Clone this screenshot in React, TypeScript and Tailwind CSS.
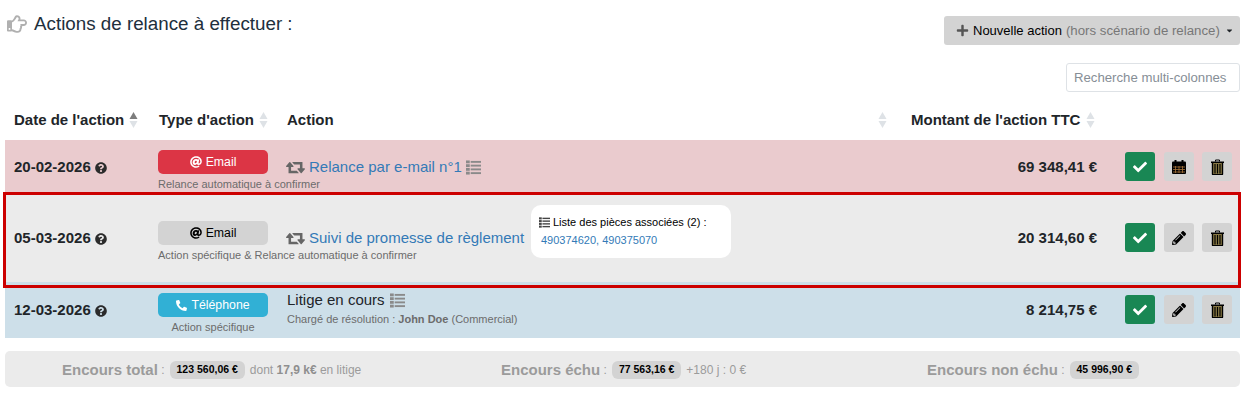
import React from "react";
import { FaRegHandPointRight, FaCheck, FaPencilAlt, FaPhone, FaAt, FaQuestionCircle, FaPlus, FaCaretDown } from "react-icons/fa";

function Sort({ active = false }: { active?: boolean }) {
  return (
    <svg width="9" height="18" viewBox="0 0 9 18" className="shrink-0">
      <path d="M4.5 1 L8.5 8 H0.5 Z" fill={active ? "#7d7d7d" : "#dee2e6"} />
      <path d="M4.5 17 L8.5 10 H0.5 Z" fill="#dee2e6" />
    </svg>
  );
}

function Retweet() {
  return (
    <svg width="19" height="18" viewBox="0 0 1920 1792" fill="#666" className="shrink-0 ml-[-1px]">
      <path d="M1280 1504q0 13-9.5 22.5t-22.5 9.5h-960q-8 0-13.5-2t-9-7-5.5-8-3-11.5-1-11.5v-600h-192q-26 0-45-19t-19-45q0-24 15-41l320-384q19-22 49-22t49 22l320 384q15 17 15 41 0 26-19 45t-45 19h-192v384h576q16 0 25 11l160 192q7 10 7 21zm640-416q0 24-15 41l-320 384q-20 23-49 23t-49-23l-320-384q-15-17-15-41 0-26 19-45t45-19h192v-384h-576q-16 0-25-12l-160-192q-7-9-7-20 0-13 9.5-22.5t22.5-9.5h960q8 0 13.5 2t9 7 5.5 8.5 3 11.5 1 11v600h192q26 0 45 19t19 45z" />
    </svg>
  );
}

function ListIcon({ size = 15, color = "#8a8a8a" }: { size?: number; color?: string }) {
  return (
    <svg width={size} height={size} viewBox="0 0 16 15" fill={color} className="shrink-0">
      <rect x="0" y="0" width="4" height="3" />
      <rect x="0" y="4" width="4" height="3" />
      <rect x="0" y="8" width="4" height="3" />
      <rect x="0" y="12" width="4" height="3" />
      <rect x="5" y="0.5" width="11" height="2" />
      <rect x="5" y="4.5" width="11" height="2" />
      <rect x="5" y="8.5" width="11" height="2" />
      <rect x="5" y="12.5" width="11" height="2" />
    </svg>
  );
}

function Trash() {
  return (
    <svg width="13" height="16" viewBox="0 0 13 16" className="shrink-0">
      <path d="M4.5 2.5 V1 H8.5 V2.5" fill="none" stroke="#000" strokeWidth="1" />
      <rect x="0" y="2.5" width="13" height="1.5" fill="#000" />
      <rect x="1.5" y="4" width="10" height="11.5" fill="#8a7a45" />
      <path d="M1.5 4 V15 a0.8 0.8 0 0 0 0.8 0.8 H10.7 a0.8 0.8 0 0 0 0.8 -0.8 V4" fill="none" stroke="#000" strokeWidth="1.4" />
      <path d="M4 5 V14.5 M6.5 5 V14.5 M9 5 V14.5" stroke="#000" strokeWidth="1.2" />
    </svg>
  );
}

function Calendar() {
  return (
    <svg width="14" height="14" viewBox="0 0 14 14" className="shrink-0">
      <rect x="0" y="1.5" width="14" height="12.5" rx="1" fill="#000" />
      <rect x="2.5" y="0" width="2" height="3" fill="#000" />
      <rect x="9.5" y="0" width="2" height="3" fill="#000" />
      <path d="M1 7 H13 M1 9.5 H13 M1 12 H13" stroke="#a8743a" strokeWidth="0.8" />
      <path d="M3.5 6 V13 M7 6 V13 M10.5 6 V13" stroke="#a8743a" strokeWidth="0.8" />
    </svg>
  );
}

function ActionButton({ kind }: { kind: "check" | "cal" | "pen" | "trash" }) {
  if (kind === "check")
    return (
      <div className="w-[30px] h-[29px] rounded-[3px] bg-[#198754] text-white flex items-center justify-center">
        <FaCheck size={14} />
      </div>
    );
  return (
    <div className="w-[30px] h-[29px] rounded-[3px] bg-[#d3d3d3] text-black flex items-center justify-center">
      {kind === "cal" && <Calendar />}
      {kind === "pen" && <FaPencilAlt size={14} />}
      {kind === "trash" && <Trash />}
    </div>
  );
}

function Row({ bg, h, date, badge, action, amount, second, extra, btnCls = "mt-[1px]", textCls = "mt-[2px]" }: { bg: string; h: string; date: string; badge: React.ReactNode; action: React.ReactNode; amount: string; second: "cal" | "pen"; extra?: React.ReactNode; btnCls?: string; textCls?: string }) {
  return (
    <div className={`relative flex items-center ${bg} ${h}`}>
      <div className={`w-[144px] pl-[9px] flex items-center gap-[4px] text-[15px] font-bold text-[#212529] ${textCls}`}>
        {date}
        <FaQuestionCircle size={12} className="mt-[2px] text-[#2b2b2b]" />
      </div>
      <div className="w-[138px] pl-[9px] shrink-0">{badge}</div>
      <div className="flex-1 min-w-0">{action}</div>
      <div className={`text-[15px] font-bold text-[#212529] mr-[28px] ${textCls}`}>{amount}</div>
      <div className={`flex items-center w-[115px] shrink-0 gap-[8px] ${btnCls}`}>
        <div className="mr-[1px]"><ActionButton kind="check" /></div>
        <ActionButton kind={second} />
        <ActionButton kind="trash" />
      </div>
      {extra}
    </div>
  );
}

function Badge({ cls, icon, label }: { cls: string; icon: React.ReactNode; label: string }) {
  return (
    <div className={`w-[110px] h-[24px] rounded-[5px] flex items-center justify-center gap-[4px] text-[12.3px] ${cls}`}>
      {icon}
      {label}
    </div>
  );
}

function Small({ children, className = "" }: { children: React.ReactNode; className?: string }) {
  return <div className={`text-[11px] leading-[12px] text-[#6c6c6c] whitespace-nowrap ${className}`}>{children}</div>;
}

function Pill({ children }: { children: React.ReactNode }) {
  return <span className="inline-flex items-center h-[18px] px-[7px] rounded-[6px] bg-[#d3d3d3] text-[10.5px] font-bold text-black ml-[5px] mr-[5px]">{children}</span>;
}

export default function App() {
  return (
    <div className="w-[1249px] h-[400px] bg-white overflow-hidden font-['Liberation_Sans',Arial,sans-serif] text-[#212529]">
      <div className="pl-[7px] pr-[9px] flex justify-between items-start h-[63px]">
        <div className="flex items-center gap-[7px] pt-[12px]">
          <FaRegHandPointRight size={20} className="text-[#b0b0b0]" />
          <span className="text-[18.8px] leading-[24px] text-[#212f3c]">Actions de relance à effectuer :</span>
        </div>
        <div className="mt-[16px] w-[296px] h-[29px] rounded-[3px] bg-[#d3d3d3] flex items-center pl-[12px] text-[13px]">
          <FaPlus size={13} className="text-[#555] shrink-0" />
          <span className="text-black ml-[4px]">Nouvelle action</span>
          <span className="text-[#777] ml-[4px] text-[13.25px]">(hors scénario de relance)</span>
          <FaCaretDown size={9} className="ml-[5px] text-[#212529]" />
        </div>
      </div>
      <div className="flex justify-end pr-[9px] h-[37px]">
        <div className="w-[174px] h-[29px] rounded-[3px] border border-[#dee2e6] flex items-center pl-[7px] text-[13.2px] text-[#868e96]">Recherche multi-colonnes</div>
      </div>
      <div className="ml-[5px] mr-[9px]">
        <div className="flex items-center h-[40px] text-[15px] font-bold text-[#212529]">
          <div className="w-[144px] pl-[9px] flex items-center gap-[5px]">Date de l'action <Sort active /></div>
          <div className="w-[138px] pl-[10px] flex items-center gap-[5px]">Type d'action <Sort /></div>
          <div className="flex-1 flex items-center justify-between pr-[24px]">Action <Sort /></div>
          <div className="w-[219px] flex items-center gap-[6px] whitespace-nowrap">Montant de l'action TTC <Sort /></div>
          <div className="w-[110px]" />
        </div>
        <Row
          bg="bg-[#eacbce]"
          h="h-[52px]"
          date="20-02-2026"
          second="cal"
          amount="69 348,41 €"
          badge={
            <div className="pt-[8px]">
              <Badge cls="bg-[#dc3545] text-white" icon={<FaAt size={12} />} label="Email" />
              <Small className="mt-[4px]">Relance automatique à confirmer</Small>
            </div>
          }
          action={
            <div className="flex items-center gap-[4px] text-[15px] text-[#337ab7] mt-[2px]">
              <Retweet />
              <span>Relance par e-mail n°1</span>
              <ListIcon />
            </div>
          }
        />
        <Row
          bg="bg-[#ebebeb]"
          h="h-[90px]"
          date="05-03-2026"
          second="pen"
          amount="20 314,60 €"
          badge={
            <div className="pt-[8px]">
              <Badge cls="bg-[#d3d3d3] text-black" icon={<FaAt size={12} />} label="Email" />
              <Small className="mt-[4px]">Action spécifique &amp; Relance automatique à confirmer</Small>
            </div>
          }
          action={
            <div className="flex items-center">
              <div className="flex items-center gap-[4px] text-[15px] text-[#337ab7] w-[244px] whitespace-nowrap mt-[2px]">
                <Retweet />
                <span>Suivi de promesse de règlement</span>
              </div>
              <div className="w-[200px] h-[53px] mb-[11px] rounded-[10px] bg-white px-[8px] pt-[11px] text-[11px]">
                <div className="flex items-center gap-[3px] text-black leading-[12px] whitespace-nowrap">
                  <ListIcon size={11} color="#444" />
                  <span>Liste des pièces associées (2) :</span>
                </div>
                <div className="text-[#337ab7] mt-[6px] ml-[2px] leading-[12px]">490374620, 490375070</div>
              </div>
            </div>
          }
          extra={<div className="absolute z-10 left-[-2px] right-[-1px] top-[0px] h-[96px] border-[3px] border-[#cc0000] pointer-events-none" />}
        />
        <Row
          bg="bg-[#cddfe9]"
          h="h-[56px]"
          date="12-03-2026"
          second="pen"
          amount="8 214,75 €"
          btnCls="mt-[-1px]"
          textCls=""
          badge={
            <div className="pt-[6px]">
              <Badge cls="bg-[#31b0d5] text-white" icon={<FaPhone size={11} className="scale-x-[-1]" />} label="Téléphone" />
              <Small className="mt-[4px] w-[110px] text-center">Action spécifique</Small>
            </div>
          }
          action={
            <div className="pb-[3px]">
              <div className="flex items-center gap-[5px] text-[15px] leading-[16px] text-[#212529]">
                <span>Litige en cours</span>
                <ListIcon />
              </div>
              <Small className="mt-[5px]">Chargé de résolution : <b>John Doe</b> (Commercial)</Small>
            </div>
          }
        />
        <div className="mt-[13px] h-[36px] pt-[2px] rounded-[5px] bg-[#ebebeb] flex items-center text-[#9b9b9b] text-[12px]">
          <div className="w-[496px] pl-[57px] flex items-center whitespace-nowrap">
            <b className="text-[15px]">Encours total</b>&nbsp;:<Pill>123 560,06 €</Pill>dont&nbsp;<b className="text-[#8f8f8f]">17,9 k€</b>&nbsp;en litige
          </div>
          <div className="w-[426px] flex items-center whitespace-nowrap">
            <b className="text-[15px]">Encours échu</b>&nbsp;:<Pill>77 563,16 €</Pill>+180 j : 0 €
          </div>
          <div className="flex items-center whitespace-nowrap">
            <b className="text-[15px]">Encours non échu</b>&nbsp;:<Pill>45 996,90 €</Pill>
          </div>
        </div>
      </div>
    </div>
  );
}
